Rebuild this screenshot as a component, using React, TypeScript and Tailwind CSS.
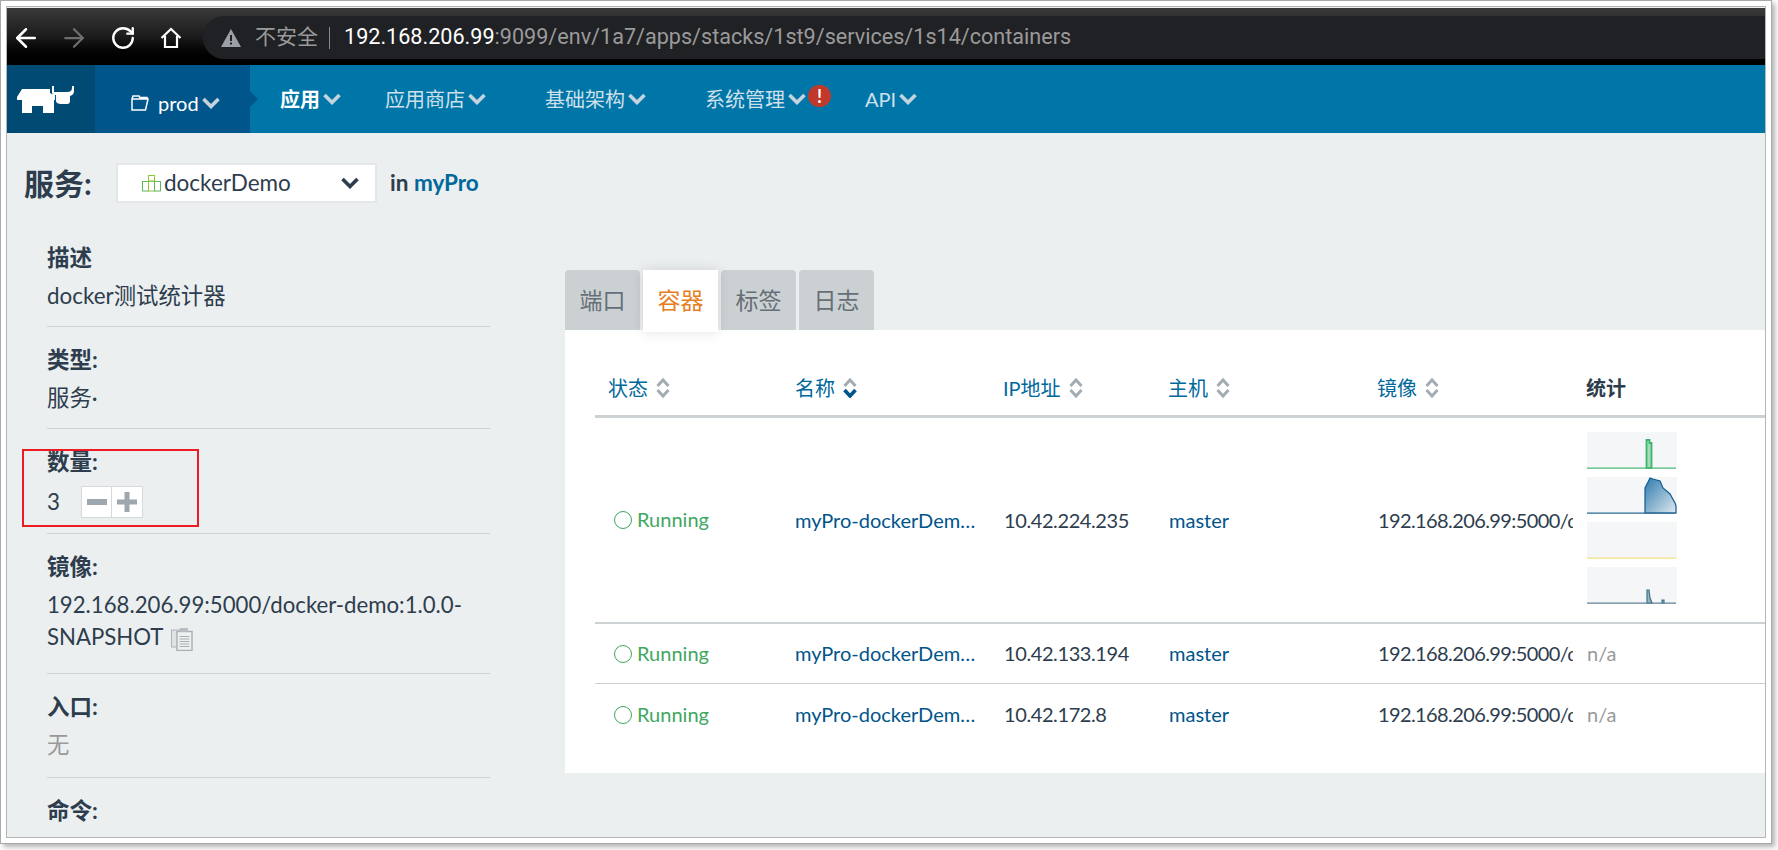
import React from 'react';
import { ArrowLeft, ArrowRight, RotateCw } from 'lucide-react';

const FONT = "font-[Lato,'Noto_Sans_CJK_SC',sans-serif]";

const Chevron = ({ className = '' }: { className?: string }) => (
  <svg width="18" height="12" viewBox="0 0 18 12" className={className}>
    <polyline points="1.5,2 9,9.5 16.5,2" fill="none" stroke="currentColor" strokeWidth="3.6" />
  </svg>
);

const SortIcon = ({ active }: { active?: boolean }) => (
  <svg width="14" height="20" viewBox="0 0 14 20" className="ml-2 shrink-0">
    <polyline points="1.5,8 7,2 12.5,8" fill="none" stroke="#a4abb1" strokeWidth="3" />
    <polyline points="1.5,12 7,18 12.5,12" fill="none" stroke={active ? '#00558b' : '#a4abb1'} strokeWidth={active ? 3.6 : 3} />
  </svg>
);

const Logo = () => (
  <svg width="58" height="28" viewBox="0 0 58 28">
    <path d="M0 12 L5 4 H33 V8 L39 11 V15 H37 V28 H26 V21 H15 V28 H5 V15 H0 Z" fill="#fff" />
    <path d="M35 1 H37 V7 H50 Q55 7 55 3 V1 H57 V6 Q57 10 53 11 V16 Q53 19 50 19 H43 Q39 19 39 16 V11 Q35 10 35 7 Z" fill="#fff" />
    <path d="M38.5 10 V16.5 Q39 19.5 43 19.5" fill="none" stroke="#00558b" strokeWidth="1" />
  </svg>
);

const FolderIcon = () => (
  <svg width="20" height="18" viewBox="0 0 20 18">
    <path d="M2 5 V16 H15.5 L18 5 Z M2 5 L3 2 H9 L10 3.5 H17 V5" fill="none" stroke="#fff" strokeWidth="1.5" />
  </svg>
);

const StackIcon = () => (
  <svg width="19" height="17" viewBox="0 0 19 17">
    <rect x="6.5" y="0.5" width="6" height="5.5" fill="none" stroke="#8cc63f" />
    <rect x="0.5" y="6.5" width="6" height="9.5" fill="none" stroke="#5cb85c" />
    <rect x="6.5" y="6.5" width="6" height="9.5" fill="none" stroke="#8cc63f" />
    <rect x="12.5" y="6.5" width="6" height="9.5" fill="none" stroke="#5cb85c" />
  </svg>
);

const CopyIcon = () => (
  <svg width="22" height="24" viewBox="0 0 22 24" className="inline-block align-[-6px] ml-2">
    <rect x="0.5" y="3" width="12" height="17" fill="#dfe3e6" stroke="#adb3b7" />
    <rect x="6" y="4.5" width="15" height="19" fill="#eef1f2" stroke="#a8aeb2" strokeWidth="1.4" />
    <rect x="9" y="1" width="8" height="4" fill="#b8bdc1" />
    <path d="M8.5 9.5H18.5M8.5 12H18.5M8.5 14.5H18.5M8.5 17H18.5M8.5 19.5H18.5" stroke="#a8aeb2" />
  </svg>
);

const Spark = ({ line, children }: { line: string; children?: React.ReactNode }) => (
  <svg width="90" height="37" viewBox="0 0 90 37" className="block bg-[#f4f6f8]">
    {children}
    <line x1="0" y1="36.2" x2="89" y2="36.2" stroke={line} strokeWidth="1.3" />
  </svg>
);

const Section = ({ label, children, pad = 'pb-[14px]', last }: { label: string; children?: React.ReactNode; pad?: string; last?: boolean }) => (
  <div className={`pt-[18px] ${pad} ${last ? '' : 'border-b border-[#cdd2d5]'}`}>
    <div className="h-[30px] text-[22.5px] leading-[30px] font-bold text-[#2e3d4d]">{label}</div>
    {children && <div className="mt-[7px] text-[22.4px] leading-8 text-[#2e3d4d]">{children}</div>}
  </div>
);

const NAV = [
  { label: '应用', cls: 'ml-[30px] font-bold text-white', w: 'w-10' },
  { label: '应用商店', cls: 'ml-[44px] text-[#cfe0ea]', w: 'w-20' },
  { label: '基础架构', cls: 'ml-[59px] text-[#cfe0ea]', w: 'w-20' },
  { label: '系统管理', cls: 'ml-[59px] text-[#cfe0ea]', w: 'w-20' },
];

const ROWS = [
  { ip: '10.42.224.235', h: 'h-[206px]', border: 'border-b-2', stats: true },
  { ip: '10.42.133.194', h: 'h-[60px]', border: 'border-b', stats: false },
  { ip: '10.42.172.8', h: 'h-[61px]', border: '', stats: false },
];

const HEADS: { label: string; active?: boolean }[] = [
  { label: '状态' },
  { label: '名称', active: true },
  { label: 'IP地址' },
  { label: '主机' },
  { label: '镜像' },
];

export default function App() {
  return (
    <div className={`w-[1778px] h-[850px] bg-white overflow-hidden ${FONT}`}>
      <div className="w-[1772px] h-[844px] border border-[#a9a9a9] bg-white p-[5px] shadow-[3px_3px_5px_rgba(0,0,0,0.3)]">
        <div className="w-full h-full border border-[#b5b5b5] pt-px flex flex-col overflow-hidden bg-[#ebeff0]">

          {/* Browser bar */}
          <div className="h-[57px] shrink-0 flex bg-gradient-to-b from-[#3a3a3a] via-[#1c1c1c] to-black font-[Roboto,'Noto_Sans_CJK_SC',sans-serif]">
            <div className="w-[196px] shrink-0 mt-2 mb-[6px] flex items-center pl-[4px] text-white">
              <ArrowLeft size={30} strokeWidth={2} />
              <ArrowRight size={30} strokeWidth={1.8} className="ml-[18px] text-[#6f6f6f]" />
              <RotateCw size={26} strokeWidth={2.2} className="ml-[21px]" />
              <svg width="22" height="22" viewBox="0 0 22 22" className="ml-6">
                <path d="M1.5 11 L11 2 L20.5 11 M5 9 V20 H17 V9" fill="none" stroke="#fff" strokeWidth="2.2" />
              </svg>
            </div>
            <div className="flex-1 mt-2 mb-[6px] bg-[#202124] rounded-l-[21px] flex items-center pl-[18px] text-[21.6px]">
              <svg width="20" height="18" viewBox="0 0 20 18">
                <path d="M10 0 L20 18 H0 Z" fill="#9aa0a6" />
                <rect x="9" y="6" width="2" height="6" fill="#202124" />
                <rect x="9" y="13.5" width="2" height="2" fill="#202124" />
              </svg>
              <span className="ml-[14px] text-[21px] text-[#9a9a9a]">不安全</span>
              <span className="ml-[11px] w-px h-[22px] bg-[#8a8a8a]" />
              <span className="ml-[14px] text-white">192.168.206.99</span>
              <span className="text-[#9a9a9a]">:9099/env/1a7/apps/stacks/1st9/services/1s14/containers</span>
            </div>
          </div>

          {/* Nav */}
          <div className="h-[68px] shrink-0 flex bg-[#0075a8] text-[20px]">
            <div className="w-[88px] shrink-0 bg-[#004a73] flex items-center justify-center pr-[10px]">
              <Logo />
            </div>
            <div className="relative w-[155px] shrink-0 bg-[#00558b] flex items-center pl-[35px] pt-[8px] text-white">
              <FolderIcon />
              <span className="ml-2">prod</span>
              <Chevron className="ml-[3px] text-[#c6d3dc]" />
              <span className="absolute left-full top-[26px] border-y-[8px] border-l-[8px] border-y-transparent border-l-[#00558b]" />
            </div>
            {NAV.map(n => (
              <div key={n.label} className={`flex items-center ${n.cls}`}>
                <span className={n.w}>{n.label}</span>
                <Chevron className="ml-[3px] text-[#c4d4de]" />
              </div>
            ))}
            <span className="ml-[2px] mt-5 w-[23px] h-[22px] rounded-full bg-[#c0392b] text-white text-[18px] leading-[22px] font-bold text-center">!</span>
            <div className="ml-[34px] flex items-center text-[#cfe0ea]">
              <span>API</span>
              <Chevron className="ml-[3px] text-[#c4d4de]" />
            </div>
          </div>

          {/* Content */}
          <div className="flex-1 flex min-h-0">
            <div className="w-[558px] shrink-0 pt-[30px] pl-[17px]">
              <div className="h-10 flex items-center">
                <span className="w-[92px] text-[30px] font-bold text-[#2e3d4d]">服务:</span>
                <div className="w-[261px] h-10 bg-white border-2 border-[#e3e7ea] flex items-center pl-[24px] pr-4 text-[22.5px] text-[#2e3d4d]">
                  <StackIcon />
                  <span className="ml-[3px]">dockerDemo</span>
                  <Chevron className="ml-auto text-[#2e3d4d]" />
                </div>
                <span className="ml-[13px] text-[22.5px] font-bold text-[#2e3d4d]">in <span className="text-[#00689b]">myPro</span></span>
              </div>
              <div className="ml-[23px] mt-[22px] w-[443px]">
                <Section label="描述">docker测试统计器</Section>
                <Section label="类型:">服务·</Section>
                <Section label="数量:">
                  <div className="flex items-center h-[35px]">
                    <span className="w-[34px]">3</span>
                    <div className="flex h-[32px] bg-white border border-[#d5d9dc]">
                      <span className="w-[30px] flex items-center justify-center border-r border-[#d5d9dc]">
                        <svg width="20" height="6"><rect width="20" height="6" fill="#9ea7ae" /></svg>
                      </span>
                      <span className="w-[30px] flex items-center justify-center">
                        <svg width="20" height="20"><path d="M7.5 0h5v7.5H20v5h-7.5V20h-5v-7.5H0v-5h7.5z" fill="#9ea7ae" /></svg>
                      </span>
                    </div>
                  </div>
                </Section>
                <Section label="镜像:" pad="pb-[20px]">
                  <div className="text-[22.2px]">192.168.206.99:5000/docker-demo:1.0.0-<br />SNAPSHOT<CopyIcon /></div>
                </Section>
                <Section label="入口:" pad="pb-[16px]"><span className="text-[#999]">无</span></Section>
                <Section label="命令:" last />
              </div>
            </div>

            {/* Tabs */}
            <div className="flex-1 min-w-0 pt-[137px]">
              <div className="flex gap-[3px] text-[23px] leading-[60px] text-center">
                <div className="w-[75px] h-[60px] bg-[#cbd0d3] rounded-t-sm text-[#666f76]">端口</div>
                <div className="relative z-10 w-[75px] h-[62px] -mb-[2px] bg-white text-[#e67e22] shadow-[0_0_12px_rgba(0,0,0,0.12)]">容器</div>
                <div className="w-[75px] h-[60px] bg-[#cbd0d3] rounded-t-sm text-[#666f76]">标签</div>
                <div className="w-[75px] h-[60px] bg-[#cbd0d3] rounded-t-sm text-[#666f76]">日志</div>
              </div>
              <div className="relative bg-white pl-[30px] pt-[30px] pb-[28px]">
                <table className="w-[1171px] table-fixed border-separate border-spacing-0 text-[20px]">
                  <colgroup>
                    <col className="w-[187px]" />
                    <col className="w-[208px]" />
                    <col className="w-[165px]" />
                    <col className="w-[209px]" />
                    <col className="w-[209px]" />
                    <col />
                  </colgroup>
                  <thead>
                    <tr>
                      {HEADS.map(h => (
                        <th key={h.label} className="h-[58px] pl-[13px] pt-px border-b-[3px] border-[#cdd2d5] font-normal text-left text-[#00689b]">
                          <span className="flex items-center">{h.label}<SortIcon active={h.active} /></span>
                        </th>
                      ))}
                      <th className="pl-[13px] pt-px border-b-[3px] border-[#cdd2d5] font-bold text-left text-[#2e3d4d]">统计</th>
                    </tr>
                  </thead>
                  <tbody>
                    {ROWS.map(r => (
                      <tr key={r.ip}>
                        <td className={`${r.h} ${r.border} border-[#cdd2d5] pl-[19px] pb-[2px]`}>
                          <span className="flex items-center text-[#3fa75f]">
                            <span className="w-[18px] h-[18px] mt-0.5 rounded-full border border-[#3fa75f] shrink-0" />
                            <span className="ml-[5px]">Running</span>
                          </span>
                        </td>
                        <td className={`${r.border} border-[#cdd2d5] pl-[13px] pr-[14px] pb-px truncate text-[#00558b]`}>myPro-dockerDemo-1</td>
                        <td className={`${r.border} border-[#cdd2d5] pl-[14px] pb-px tracking-[-0.4px] text-[#2e3d4d]`}>{r.ip}</td>
                        <td className={`${r.border} border-[#cdd2d5] pl-[14px] pb-px text-[#00558b]`}>master</td>
                        <td className={`${r.border} border-[#cdd2d5] pl-[14px] pb-px overflow-hidden whitespace-nowrap tracking-[-0.6px] text-[#2e3d4d]`}>192.168.206.99:5000/d</td>
                        <td className={`${r.border} border-[#cdd2d5] pl-[14px] ${r.stats ? 'pt-[14px] pb-[18px]' : 'pb-px text-[#999]'}`}>
                          {r.stats ? (
                            <div className="flex flex-col gap-2">
                              <Spark line="#4dbb78">
                                <path d="M59.5 36V8H62.5V11H64.5V36Z" fill="#a5dcb9" stroke="#3db56c" strokeWidth="1.8" />
                              </Spark>
                              <Spark line="#2d6b94">
                                <defs>
                                  <linearGradient id="cpu" x1="0" y1="0" x2="1" y2="1">
                                    <stop offset="0%" stopColor="#2f7cae" />
                                    <stop offset="100%" stopColor="#dfe8ef" />
                                  </linearGradient>
                                </defs>
                                <path d="M58 36V11L59 9L61 5L63 1L66 2L73 4L76 11L83 17L88 26L89 29V36Z" fill="url(#cpu)" stroke="#0f5b91" strokeWidth="1.2" />
                              </Spark>
                              <Spark line="#f2e27c" />
                              <Spark line="#5f8594">
                                <path d="M60 36V23H62L63 31L65 36ZM75 36V33H77V36Z" fill="#9bb6c0" stroke="#3f7185" strokeWidth="1.2" />
                              </Spark>
                            </div>
                          ) : 'n/a'}
                        </td>
                      </tr>
                    ))}
                  </tbody>
                </table>
              </div>
            </div>
          </div>

        </div>
      </div>
      {/* annotation box drawn over the shot */}
      <div className="absolute left-[22px] top-[449px] w-[177px] h-[78px] border-2 border-[#ed1c24]" />
    </div>
  );
}
